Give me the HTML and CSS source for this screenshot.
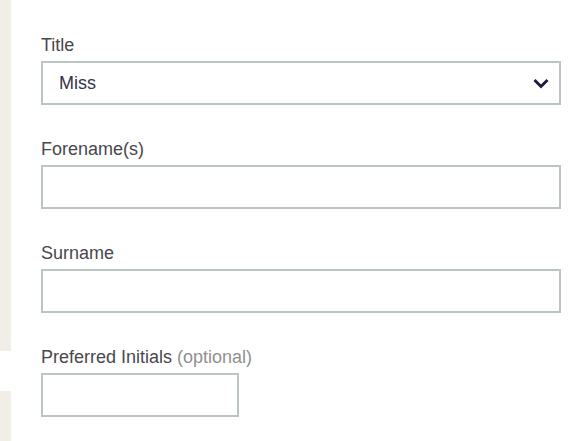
FILE: index.html
```html
<!DOCTYPE html>
<html>
<head>
<meta charset="utf-8">
<link rel="stylesheet" href="styles.css">
</head>
<body>
<div class="page">
  <div class="rail">
    <div class="rail-top"></div>
    <div class="rail-bottom"></div>
  </div>
  <form class="form">
    <div class="field">
      <label class="label">Title</label>
      <div class="select">
        <span class="select-value">Miss</span>
        <svg class="chevron" width="16" height="11" viewBox="0 0 16 11"><path d="M1.5 2 L8 8.5 L14.5 2" fill="none" stroke="#1f1d3d" stroke-width="3"/></svg>
      </div>
    </div>
    <div class="field">
      <label class="label">Forename(s)</label>
      <div class="input"></div>
    </div>
    <div class="field">
      <label class="label">Surname</label>
      <div class="input"></div>
    </div>
    <div class="field">
      <label class="label">Preferred Initials <span class="optional">(optional)</span></label>
      <div class="input input-short"></div>
    </div>
  </form>
</div>
</body>
</html>
```
FILE: styles.css
```css
html, body {
  margin: 0;
  padding: 0;
  background: #ffffff;
}
.page {
  display: flex;
  height: 441px;
  overflow: hidden;
}
.rail {
  width: 11px;
  flex: 0 0 11px;
  display: flex;
  flex-direction: column;
  gap: 40px;
}
.rail-top {
  height: 351px;
  background: #f0eee7;
}
.rail-bottom {
  flex: 1;
  background: #f0eee7;
}
.form {
  padding: 33px 0 0 30px;
  display: flex;
  flex-direction: column;
  gap: 32px;
  font-family: "Liberation Sans", Arial, sans-serif;
}
.field {
  display: flex;
  flex-direction: column;
  gap: 4px;
}
.label {
  font-size: 18px;
  line-height: 24px;
  color: #48484c;
}
.optional {
  color: #909090;
}
.select, .input {
  box-sizing: border-box;
  width: 520px;
  height: 44px;
  border: 2px solid #b9c5c1;
  background: #fff;
}
.select {
  display: flex;
  align-items: center;
  justify-content: space-between;
  padding: 0 10px 0 16px;
}
.select-value {
  font-size: 18px;
  color: #34344a;
}
.input-short {
  width: 198px;
}
```
